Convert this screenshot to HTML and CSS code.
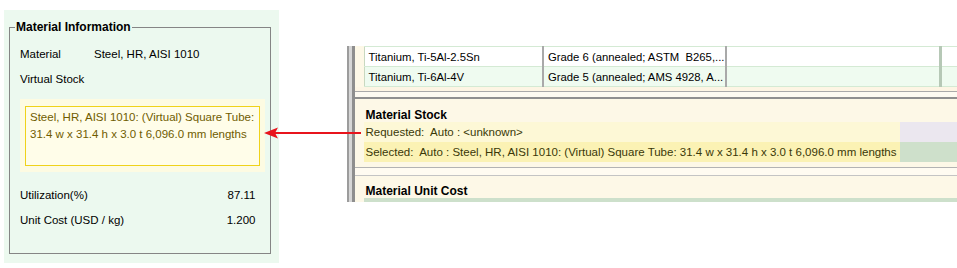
FILE: index.html
```
<!DOCTYPE html>
<html lang="en">
<head>
    <meta charset="UTF-8">
    <meta name="viewport" content="width=device-width, initial-scale=1.0">
    <title>Material Stock</title>
    <link rel="stylesheet" href="styles.css">
</head>
<body>
    <div class="screen">
        <!-- Material information card -->
        <div class="info-panel">
            <fieldset class="info-box">
                <legend>Material Information</legend>
                <div class="info-row">
                    <span class="info-label">Material</span>
                    <span>Steel, HR, AISI 1010</span>
                </div>
                <div class="info-row">
                    <span>Virtual Stock</span>
                </div>
                <div class="stock-note">
                    <div class="stock-note-inner">Steel, HR, AISI 1010: (Virtual) Square Tube: 31.4 w x 31.4 h x 3.0 t 6,096.0 mm lengths</div>
                </div>
                <div class="info-row spaced">
                    <span>Utilization(%)</span>
                    <span class="num">87.11</span>
                </div>
                <div class="info-row">
                    <span>Unit Cost (USD / kg)</span>
                    <span class="num">1.200</span>
                </div>
            </fieldset>
        </div>

        <!-- Application view -->
        <div class="app-view">
            <div class="splitter"></div>
            <div class="app-main">
                <div class="grade-wrap">
                    <table class="grade-table">
                        <colgroup>
                            <col class="c1"><col class="c2"><col class="c3"><col class="c4">
                        </colgroup>
                        <tbody>
                            <tr>
                                <td>Titanium, Ti-5Al-2.5Sn</td>
                                <td>Grade 6 (annealed; ASTM  B265,...</td>
                                <td></td>
                                <td></td>
                            </tr>
                            <tr class="alt">
                                <td>Titanium, Ti-6Al-4V</td>
                                <td>Grade 5 (annealed; AMS 4928, A...</td>
                                <td></td>
                                <td></td>
                            </tr>
                        </tbody>
                    </table>
                </div>
                <div class="sep-a"></div>
                <section class="stock-panel">
                    <h2>Material Stock</h2>
                    <div class="stock-row requested">
                        <span class="stock-text">Requested:  Auto : &lt;unknown&gt;</span>
                        <span class="stock-side"></span>
                    </div>
                    <div class="stock-row selected">
                        <span class="stock-text">Selected:  Auto : Steel, HR, AISI 1010: (Virtual) Square Tube: 31.4 w x 31.4 h x 3.0 t 6,096.0 mm lengths</span>
                        <span class="stock-side"></span>
                    </div>
                </section>
                <div class="sep-b"></div>
                <section class="cost-panel">
                    <h2>Material Unit Cost</h2>
                    <div class="cost-strip"></div>
                </section>
            </div>
        </div>

        <!-- Callout arrow -->
        <svg class="callout-arrow" width="100" height="14" viewBox="0 0 100 14">
            <line x1="12" y1="7" x2="99" y2="7" stroke="#e8141c" stroke-width="2"/>
            <polygon points="2,7 16,1.5 13,7 16,12.5" fill="#e8141c"/>
        </svg>
    </div>
</body>
</html>
```

FILE: styles.css
```
body {
    margin: 0;
    background-color: #ffffff;
    font-family: "Liberation Sans", Arial, sans-serif;
    font-size: 11.5px;
    color: #000000;
}

.screen {
    position: relative;
    display: flex;
    align-items: flex-start;
    width: 957px;
    height: 268px;
    overflow: hidden;
}

/* Left card */
.info-panel {
    display: flex;
    flex-direction: column;
    box-sizing: border-box;
    width: 275px;
    height: 253px;
    margin: 10px 0 0 4px;
    padding: 10px 8px 9px 5px;
    background-color: #ecf9ef;
}

.info-box {
    flex: 1;
    margin: 0;
    padding: 7px 14px 0 10px;
    border: 1px solid #858585;
    min-width: 0;
}

.info-box legend {
    margin-left: -5px;
    padding: 0 1px;
    font-size: 12px;
    font-weight: bold;
    line-height: 14px;
}

.info-row {
    display: flex;
    justify-content: space-between;
    align-items: center;
    height: 25px;
}

.info-row .info-label {
    width: 74px;
}

.info-row .info-label + span {
    flex: 1;
}

.info-row.spaced {
    margin-top: 10px;
}

.num {
    text-align: right;
}

.stock-note {
    margin: 8px -9px 0 0;
    padding: 7px 5px 6px 5px;
    background-color: #fdfbe2;
}

.stock-note-inner {
    height: 56px;
    padding: 2px 4px 0 4px;
    border: 1px solid #efd21a;
    background-color: #fffde9;
    color: #6f5c00;
    line-height: 17px;
}

/* Right application view */
.app-view {
    display: flex;
    flex: 1;
    margin: 46px 0 0 68px;
}

.splitter {
    width: 8px;
    background: linear-gradient(to right, #9c9c9c 0 2px, #d6d6d6 2px 5px, #8e8e8e 5px 8px);
}

.app-main {
    flex: 1;
    min-width: 0;
    background-color: #fdf8e7;
}

.grade-wrap {
    padding-left: 9px;
}

.grade-table {
    width: 593px;
    table-layout: fixed;
    border-collapse: collapse;
    border-left: 1px solid #c8d8c0;
}

.grade-table .c1 { width: 179px; }
.grade-table .c2 { width: 183px; }
.grade-table .c3 { width: 214px; }
.grade-table .c4 { width: 17px; }

.grade-table td {
    height: 19px;
    padding: 0 0 0 4px;
    border-top: 1px solid #d4ead4;
    border-bottom: 1px solid #d4ead4;
    background-color: #ffffff;
    font-size: 11.3px;
    white-space: pre;
}

.grade-table tr.alt td {
    background-color: #effbf0;
}

.grade-table td:nth-child(1),
.grade-table td:nth-child(2) {
    border-right: 2px solid #a9a9a9;
}

.grade-table td:nth-child(3) {
    border-right: 3px solid #b6c8b6;
}

.sep-a {
    height: 12px;
    background: linear-gradient(to bottom, #fdf5e4 0 4px, #a9a9a9 4px 5px, #fdfaf1 5px 10px, #8f8f8f 10px 12px);
}

.stock-panel,
.cost-panel {
    padding-left: 9px;
}

.stock-panel {
    padding-top: 9px;
    padding-bottom: 4px;
}

.stock-panel h2,
.cost-panel h2 {
    margin: 0 0 0 2px;
    font-size: 12px;
    font-weight: bold;
    line-height: 14px;
}

.stock-row {
    display: flex;
    height: 20px;
    line-height: 20px;
    color: #3a3808;
}

.stock-text {
    width: 534px;
    padding-left: 2px;
    white-space: pre;
}

.stock-side {
    flex: 1;
}

.requested .stock-text { background-color: #fdf8d6; }
.requested .stock-side { background-color: #ebe7ef; }
.selected .stock-text { background-color: #fbf2b4; }
.selected .stock-side { background-color: #cee0cb; }

.sep-b {
    height: 10px;
    background: linear-gradient(to bottom, #fdf8e7 0 1px, #b3b3b3 1px 2px, #fffbf1 2px 9px, #c4c4c4 9px 10px);
}

.cost-panel {
    padding-top: 8px;
}

.cost-strip {
    height: 4px;
    background-color: #cde0cb;
}

.callout-arrow {
    position: absolute;
    left: 262px;
    top: 126px;
}
```
